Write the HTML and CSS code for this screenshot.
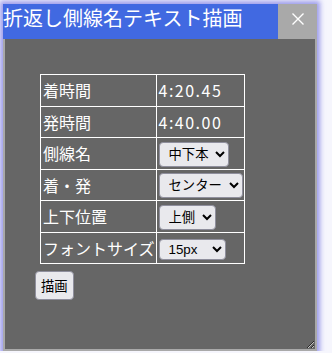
FILE: index.html
```html
<!DOCTYPE html>
<html lang="ja">

<head>
    <meta charset="UTF-8">
    <meta name="viewport" content="width=device-width, initial-scale=1.0">
    <title>折返し側線名テキスト描画</title>
    <link rel="stylesheet" href="styles.css">
</head>

<body>

    <div class="dialog">
        <div class="dialog-head">
            <span class="dialog-title">折返し側線名テキスト描画</span>
            <span class="dialog-close">
                <svg width="12" height="12" viewBox="0 0 12 12">
                    <path d="M0.5 0.5 L11.5 11.5 M11.5 0.5 L0.5 11.5" stroke="#fff" stroke-width="1.4" fill="none" />
                </svg>
            </span>
        </div>
        <div class="dialog-body">
            <table class="info-table">
                <tr>
                    <td>着時間</td>
                    <td class="time">4:20.45</td>
                </tr>
                <tr>
                    <td>発時間</td>
                    <td class="time">4:40.00</td>
                </tr>
                <tr>
                    <td>側線名</td>
                    <td>
                        <select class="field">
                            <option>中下本</option>
                            <option>中上本</option>
                        </select>
                    </td>
                </tr>
                <tr>
                    <td>着・発</td>
                    <td>
                        <select class="field">
                            <option>センター</option>
                            <option>着</option>
                            <option>発</option>
                        </select>
                    </td>
                </tr>
                <tr>
                    <td>上下位置</td>
                    <td>
                        <select class="field">
                            <option>上側</option>
                            <option>下側</option>
                        </select>
                    </td>
                </tr>
                <tr>
                    <td>フォントサイズ</td>
                    <td>
                        <select class="field field-latin">
                            <option>15px</option>
                            <option>10px</option>
                            <option>12px</option>
                            <option>100px</option>
                        </select>
                    </td>
                </tr>
            </table>
            <button class="draw-btn">描画</button>
        </div>
    </div>

</body>

</html>
```

FILE: styles.css
```css
body {
    margin: 0;
    padding: 0;
    background-color: #f6f6fd;
    font-family: "Noto Sans CJK JP", sans-serif;
}

.dialog {
    width: 314px;
    margin: 4px 0 0 3px;
    box-shadow: 0 0 5px 3px rgba(125, 125, 230, 0.75);
}

.dialog-head {
    display: flex;
    height: 35px;
}

.dialog-title {
    flex: 1;
    background-color: #4169e1;
    color: #ffffff;
    font-size: 20px;
    line-height: 28px;
    white-space: nowrap;
    overflow: hidden;
}

.dialog-close {
    width: 39px;
    background-color: #a9a9a9;
    display: flex;
    align-items: center;
    justify-content: center;
    padding-bottom: 6px;
    box-sizing: border-box;
}

.dialog-body {
    box-sizing: border-box;
    height: 312px;
    padding: 35px 0 0 30px;
    background-color: #666666;
    border: 2px solid #a9a9a9;
    border-top: 0;
    resize: both;
    overflow: auto;
}

.info-table {
    border-collapse: collapse;
    margin: 0 0 7px 5px;
    color: #ffffff;
    font-size: 16px;
}

.info-table td {
    border: 1px solid #ffffff;
    height: 30.5px;
    padding: 0 1px 0 2px;
}

.time {
    letter-spacing: 1.5px;
}

.field,
.draw-btn {
    font-family: "Liberation Sans", "Noto Sans CJK JP", sans-serif;
    font-size: 13.33px;
    color: #000000;
    background-color: #e9e9ed;
    border: 1px solid #8f8f9d;
    border-radius: 4px;
}

.field {
    padding: 3px 3px 3px 5px;
}

.field-latin {
    padding: 1px 3px 1px 5px;
}

.draw-btn {
    display: block;
    padding: 4px 5px;
}
```
